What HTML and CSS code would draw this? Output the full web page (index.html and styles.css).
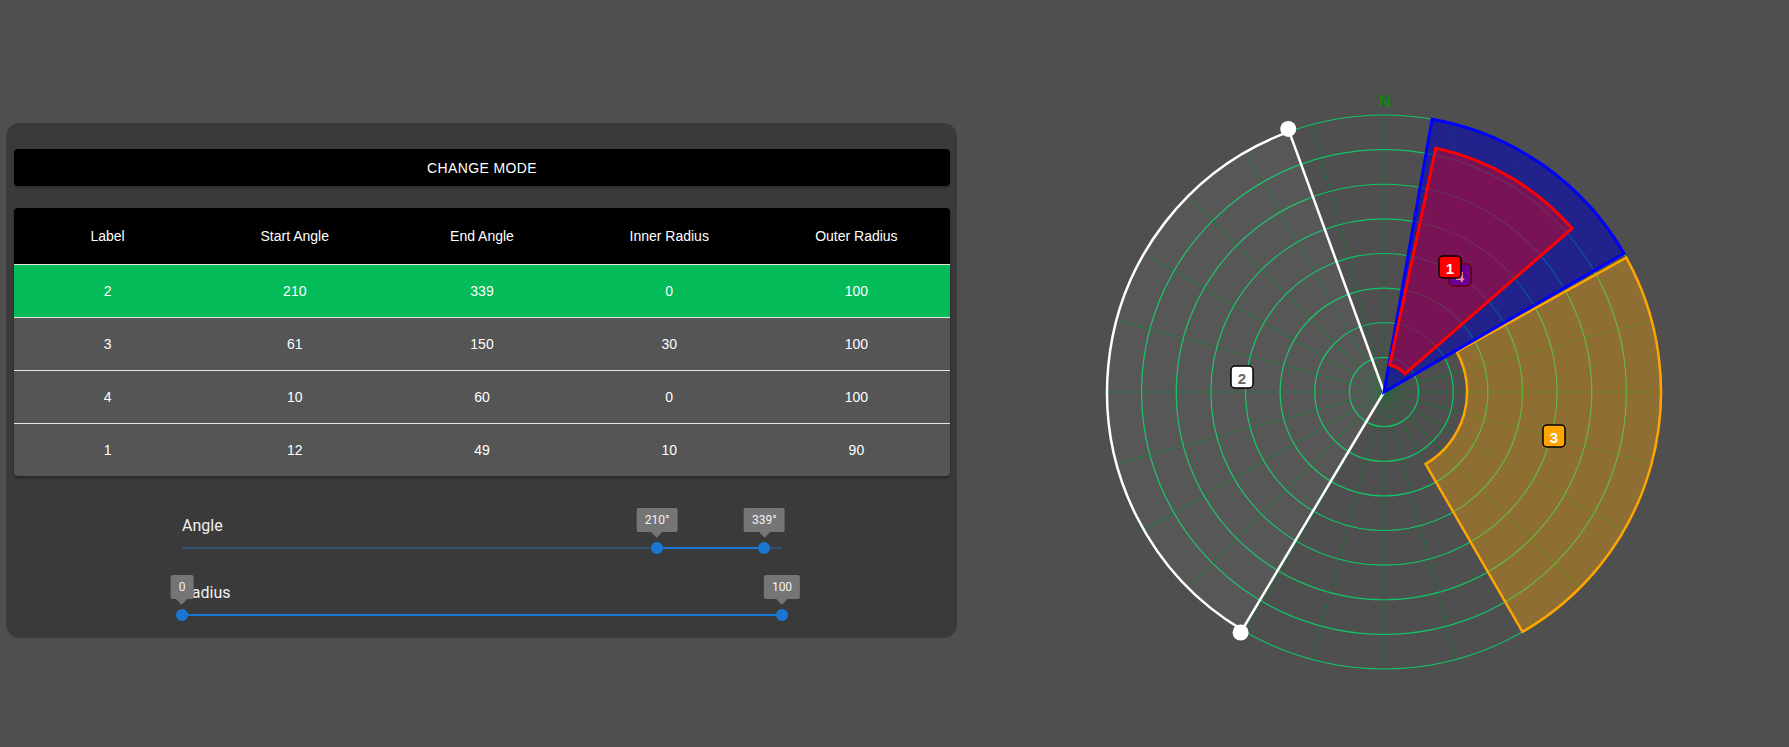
FILE: index.html
```html
<!DOCTYPE html>
<html lang="en">
<head>
<meta charset="utf-8">
<title>Sector editor</title>
<link rel="stylesheet" href="styles.css">
</head>
<body>
<div class="page">
  <section class="panel">
    <button class="mode-btn" type="button">CHANGE MODE</button>
    <div class="table">
      <div class="row head"><div>Label</div><div>Start Angle</div><div>End Angle</div><div>Inner Radius</div><div>Outer Radius</div></div>
      <div class="row selected"><div>2</div><div>210</div><div>339</div><div>0</div><div>100</div></div>
      <div class="row"><div>3</div><div>61</div><div>150</div><div>30</div><div>100</div></div>
      <div class="row"><div>4</div><div>10</div><div>60</div><div>0</div><div>100</div></div>
      <div class="row"><div>1</div><div>12</div><div>49</div><div>10</div><div>90</div></div>
    </div>
    <div class="sliders">
      <div class="slider-block">
        <div class="slider-label">Angle</div>
        <div class="slider">
          <div class="rail"></div>
          <div class="track" style="left:79.17%;width:17.91%"></div>
          <div class="thumb" style="left:79.17%"><span class="value">210°</span></div>
          <div class="thumb" style="left:97.08%"><span class="value">339°</span></div>
        </div>
      </div>
      <div class="slider-block">
        <div class="slider-label">Radius</div>
        <div class="slider">
          <div class="rail"></div>
          <div class="track" style="left:0%;width:100%"></div>
          <div class="thumb" style="left:0%"><span class="value">0</span></div>
          <div class="thumb" style="left:100%"><span class="value">100</span></div>
        </div>
      </div>
    </div>
  </section>

  <svg class="chart" width="640" height="640" viewBox="0 0 640 640">
    <g class="spokes">
      <line x1="320" y1="43" x2="320" y2="597"/>
      <line x1="320" y1="43" x2="320" y2="597" transform="rotate(15 320 320)"/>
      <line x1="320" y1="43" x2="320" y2="597" transform="rotate(30 320 320)"/>
      <line x1="320" y1="43" x2="320" y2="597" transform="rotate(45 320 320)"/>
      <line x1="320" y1="43" x2="320" y2="597" transform="rotate(60 320 320)"/>
      <line x1="320" y1="43" x2="320" y2="597" transform="rotate(75 320 320)"/>
      <line x1="320" y1="43" x2="320" y2="597" transform="rotate(90 320 320)"/>
      <line x1="320" y1="43" x2="320" y2="597" transform="rotate(105 320 320)"/>
      <line x1="320" y1="43" x2="320" y2="597" transform="rotate(120 320 320)"/>
      <line x1="320" y1="43" x2="320" y2="597" transform="rotate(135 320 320)"/>
      <line x1="320" y1="43" x2="320" y2="597" transform="rotate(150 320 320)"/>
      <line x1="320" y1="43" x2="320" y2="597" transform="rotate(165 320 320)"/>
    </g>
    <g class="rings">
      <circle cx="320" cy="320" r="34.6"/>
      <circle cx="320" cy="320" r="69.25"/>
      <circle cx="320" cy="320" r="103.9"/>
      <circle cx="320" cy="320" r="138.5"/>
      <circle cx="320" cy="320" r="173.1"/>
      <circle cx="320" cy="320" r="207.75"/>
      <circle cx="320" cy="320" r="242.4"/>
      <circle cx="320" cy="320" r="277"/>
    </g>
    <text class="north" x="321" y="29">N</text>

    <path class="sec-white" d="M176.6 560.5 L320 320 L224.23 56.9 M178.2 557.9 A277 277 0 0 1 225.26 59.7"/>
    <path class="sec-white-fill" d="M320 320 L178.2 557.9 A277 277 0 0 1 225.26 59.7 Z"/>
    <path class="sec-orange" d="M392.68 279.71 L562.27 185.71 A277 277 0 0 1 458.5 559.89 L361.55 391.97 A83.1 83.1 0 0 0 392.68 279.71 Z"/>
    <path class="sec-blue" d="M320 320 L368.1 47.2 A277 277 0 0 1 559.9 181.5 Z"/>

    <g class="tag tag-blue"><rect x="385" y="192" width="22" height="22" rx="4"/><text x="396" y="204">4</text></g>

    <path class="sec-red" d="M325.76 292.91 L371.83 76.15 A249.3 249.3 0 0 1 508.15 156.44 L340.91 301.83 A27.7 27.7 0 0 0 325.76 292.91 Z"/>

    <g class="tag tag-red"><rect x="375" y="184" width="22" height="22" rx="4"/><text x="386" y="196">1</text></g>
    <g class="tag tag-white"><rect x="167" y="294" width="22" height="22" rx="4"/><text x="178" y="306">2</text></g>
    <g class="tag tag-orange"><rect x="479" y="353" width="22" height="22" rx="4"/><text x="490" y="365">3</text></g>

    <circle class="handle" cx="176.6" cy="560.5" r="8"/>
    <circle class="handle" cx="224.23" cy="56.9" r="8"/>
  </svg>
</div>
</body>
</html>
```

FILE: styles.css
```css
* { box-sizing: border-box; }

html, body {
  margin: 0;
  padding: 0;
  background: #4f4f4f;
  font-family: "Liberation Sans", Arial, sans-serif;
  color: #fff;
}

.page {
  display: flex;
  align-items: flex-start;
  gap: 107px;
  padding-left: 6px;
}

.panel {
  width: 951px;
  height: 515px;
  margin-top: 123px;
  padding: 26px 7px 13px 8px;
  background: #3a3a3a;
  border-radius: 14px;
  display: flex;
  flex-direction: column;
}

.mode-btn {
  height: 37px;
  width: 100%;
  border: none;
  border-radius: 4px;
  background: #000;
  color: #fff;
  font-family: "Liberation Sans", Arial, sans-serif;
  font-size: 14px;
  letter-spacing: 0.4px;
  box-shadow: 0 2px 2px rgba(0,0,0,0.25);
  margin-bottom: 22px;
  padding: 0;
}

.table {
  border-radius: 4px;
  overflow: hidden;
  background: #555555;
  box-shadow: 0 2px 3px rgba(0,0,0,0.35);
}

.row {
  display: grid;
  grid-template-columns: repeat(5, 1fr);
  align-items: center;
  height: 53px;
  border-top: 1px solid #e6e6e6;
  font-size: 14px;
  text-align: center;
}

.row.head {
  height: 56px;
  border-top: none;
  background: #000;
}

.row.selected {
  background: #03bb59;
}

.sliders {
  margin-top: 38px;
  display: flex;
  flex-direction: column;
  gap: 23px;
}

.slider-block {
  width: 600px;
  margin: 0 auto;
}

.slider-label {
  font-family: Roboto, "Liberation Sans", sans-serif;
  font-size: 16px;
  line-height: 24px;
  color: #f0f0f0;
}

.slider {
  position: relative;
  height: 20px;
}

.rail {
  position: absolute;
  left: 0;
  right: 0;
  top: 9px;
  height: 2px;
  background: #2e5174;
}

.track {
  position: absolute;
  top: 9px;
  height: 2px;
  background: #1976d2;
}

.thumb {
  position: absolute;
  top: 4px;
  width: 12px;
  height: 12px;
  margin-left: -6px;
  border-radius: 50%;
  background: #1976d2;
}

.value {
  position: absolute;
  bottom: calc(100% + 10px);
  left: 50%;
  transform: translateX(-50%);
  height: 24px;
  padding: 0 8px;
  background: #757575;
  border-radius: 2px;
  font-family: Roboto, "Liberation Sans", sans-serif;
  font-size: 12px;
  line-height: 24px;
  color: #f2f2f2;
  white-space: nowrap;
  z-index: 2;
}

.value::after {
  content: "";
  position: absolute;
  left: 50%;
  bottom: -4px;
  width: 8px;
  height: 8px;
  margin-left: -4px;
  background: #757575;
  transform: rotate(45deg);
  z-index: -1;
}

.chart {
  display: block;
  margin-top: 72px;
  flex: none;
}

.spokes line {
  stroke: #1d6e34;
  stroke-width: 1;
}

.rings circle {
  fill: none;
  stroke: #12c266;
  stroke-width: 1.2;
}

.north {
  fill: #0c8a0c;
  font-family: "Liberation Sans", Arial, sans-serif;
  font-weight: bold;
  font-size: 16px;
  text-anchor: middle;
  dominant-baseline: central;
}

.sec-white {
  fill: none;
  stroke: #fff;
  stroke-width: 2.5;
  stroke-linejoin: round;
}

.sec-white-fill {
  fill: rgba(255,255,255,0.05);
  stroke: none;
}

.sec-orange {
  fill: rgba(255,165,0,0.36);
  stroke: #ffa500;
  stroke-width: 2.5;
}

.sec-blue {
  fill: rgba(0,0,190,0.56);
  stroke: #0000ff;
  stroke-width: 3;
}

.sec-red {
  fill: rgba(230,0,20,0.45);
  stroke: #ff0000;
  stroke-width: 3;
}

.handle {
  fill: #fff;
}

.tag rect {
  stroke: #000;
  stroke-width: 1.5;
}

.tag text {
  font-family: "Liberation Sans", Arial, sans-serif;
  font-weight: bold;
  font-size: 15px;
  text-anchor: middle;
  dominant-baseline: central;
  fill: #fff;
}

.tag-blue rect { fill: #0000ff; }
.tag-red rect { fill: #ff0000; }
.tag-orange rect { fill: #ffa500; }
.tag-white rect { fill: #fff; }
.tag-white text { fill: #666; }
```
